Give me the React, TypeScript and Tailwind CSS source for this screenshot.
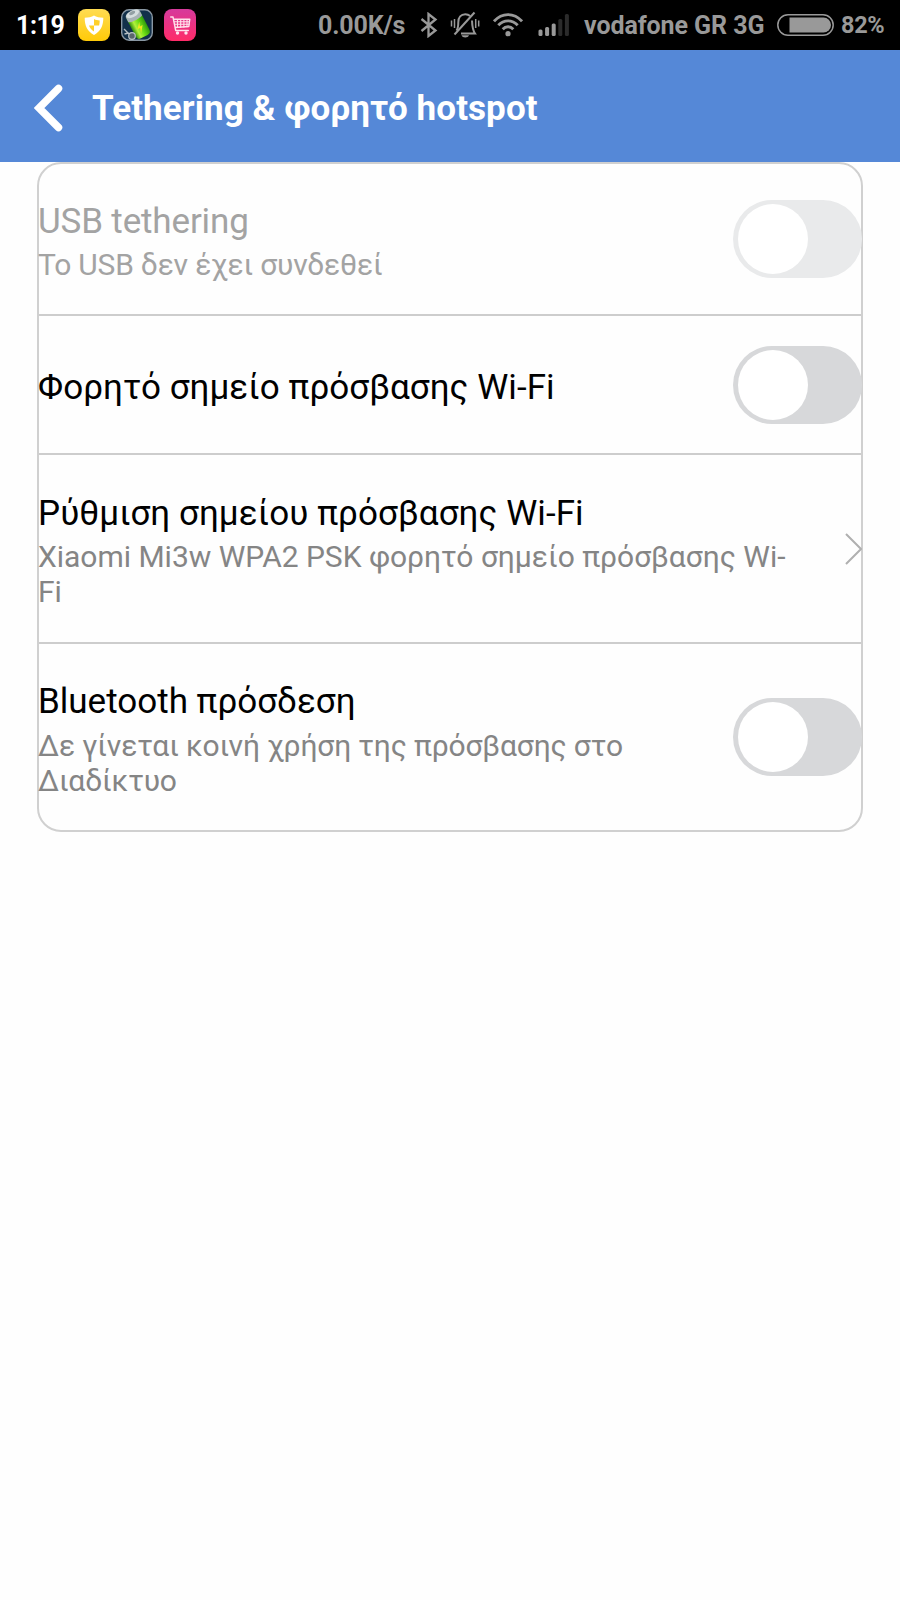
// ============================================
// Tethering settings
// Phone settings screen with status bar
// ============================================

import { ReactNode } from 'react';

interface SettingRow {
  title: string;
  lines?: string[];
  control: 'toggle' | 'link';
  disabled?: boolean;
  height: string;
  titleTracking: string;
  textTracking?: string;
}

const rows: SettingRow[] = [
  {
    title: 'USB tethering',
    lines: ['Το USB δεν έχει συνδεθεί'],
    control: 'toggle',
    disabled: true,
    height: 'h-[152px]',
    titleTracking: 'tracking-[-0.15px]',
    textTracking: 'tracking-[-0.22px]',
  },
  {
    title: 'Φορητό σημείο πρόσβασης Wi-Fi',
    control: 'toggle',
    height: 'h-[139px]',
    titleTracking: 'tracking-[0.06px]',
  },
  {
    title: 'Ρύθμιση σημείου πρόσβασης Wi-Fi',
    lines: ['Xiaomi Mi3w WPA2 PSK φορητό σημείο πρόσβασης Wi-', 'Fi'],
    control: 'link',
    height: 'h-[189px]',
    titleTracking: 'tracking-[0.08px]',
    textTracking: 'tracking-[-0.02px]',
  },
  {
    title: 'Bluetooth πρόσδεση',
    lines: ['Δε γίνεται κοινή χρήση της πρόσβασης στο', 'Διαδίκτυο'],
    control: 'toggle',
    height: 'h-[186px]',
    titleTracking: 'tracking-normal',
    textTracking: 'tracking-[-0.15px]',
  },
];

// Notification icons
const ShieldApp = () => (
  <svg className="w-8 h-8 shrink-0" viewBox="0 0 32 32">
    <defs>
      <linearGradient id="shield-bg" x1="0" y1="0" x2="0" y2="1">
        <stop offset="0" stopColor="#ffdc52" />
        <stop offset="1" stopColor="#ffca08" />
      </linearGradient>
    </defs>
    <rect width="32" height="32" rx="8" fill="url(#shield-bg)" />
    <path d="M16 6.500c2.500 1.500 5.500 2.200 9.300 2.200 0 8-2.500 13.300-9.300 17.300-6.800-4-9.300-9.300-9.300-17.300 3.800 0 6.800-.7 9.300-2.200z" fill="#fff" />
    <path d="M16 10c1.800 1 3.500 1.300 5.700 1.500 0 1.600-.2 3.300-.6 5H16zM16 16.500h-5c.8 2.400 2.400 4.400 5 6z" fill="#ffd02a" />
  </svg>
);

const BatteryApp = () => (
  <svg className="w-8 h-8 shrink-0" viewBox="0 0 32 32">
    <defs>
      <linearGradient id="cell" x1="0" y1="0" x2="1" y2="0">
        <stop offset="0" stopColor="#2c8a0c" />
        <stop offset="0.3" stopColor="#b2f23c" />
        <stop offset="0.6" stopColor="#6ddd14" />
        <stop offset="1" stopColor="#2f9a0c" />
      </linearGradient>
    </defs>
    <rect x="0.7" y="0.7" width="30.6" height="30.6" rx="7.5" fill="#12304a" stroke="#8997a3" strokeWidth="1.4" />
    <g transform="rotate(-27 16 15)">
      <rect x="9" y="3" width="15.500" height="26.500" rx="4" fill="url(#cell)" />
      <path d="M9 9.500V4.500c0-5 15.500-5 15.500 0v5c-3 2-12.500 2-15.500 0z" fill="#a7b2b5" />
      <ellipse cx="16.700" cy="4" rx="7" ry="3.200" fill="#d5dddf" />
      <ellipse cx="16.700" cy="3" rx="3.300" ry="1.600" fill="#93a0a4" />
      <path d="M19 14l-5 6h3l-1.500 5 5-6.500h-3z" fill="#f4e51f" />
    </g>
    <path d="M3 20l5 5M3.500 25l4-1" stroke="#b4bdc2" strokeWidth="1.4" />
    <circle cx="11" cy="27" r="3.300" fill="#59656c" stroke="#b9c1c5" strokeWidth="1.2" />
  </svg>
);

const CartApp = () => (
  <svg className="w-8 h-8 shrink-0" viewBox="0 0 32 32">
    <defs>
      <linearGradient id="cart-bg" x1="0" y1="0" x2="0" y2="1">
        <stop offset="0" stopColor="#d63a9c" />
        <stop offset="1" stopColor="#ff2b68" />
      </linearGradient>
    </defs>
    <rect width="32" height="32" rx="8" fill="url(#cart-bg)" />
    <g fill="none" stroke="#ffe3ec" strokeWidth="1.4" strokeLinecap="round" strokeLinejoin="round">
      <path d="M6.700 8H9l2.700 13.500h12.600M9.600 10.200h16.200l-1 7.300-13.800 1" />
      <path d="M10.300 12.700h15M10.800 15.300h14.300M13.500 10.500v8M16.700 10.500v7.800M19.900 10.500v7.600M23 10.500v7.300" strokeWidth="1.1" />
    </g>
    <circle cx="13.500" cy="24" r="1.700" fill="#ffe3ec" />
    <circle cx="22" cy="24" r="1.700" fill="#ffe3ec" />
  </svg>
);

// System icons
const BluetoothIcon = () => (
  <svg className="w-[18px] h-[26px] shrink-0" viewBox="0 0 18 26" fill="none" stroke="#999" strokeWidth="2.3">
    <path d="M1.500 7l14 11.500L8.500 24V2l7 5.500L1.500 19" />
  </svg>
);

const MutedBellIcon = () => (
  <svg className="w-[30px] h-[28px] shrink-0" viewBox="0 0 30 28" fill="none" stroke="#999">
    <path d="M6.500 19.500c1.500-2 1.800-4 1.800-8.300 0-4.800 2.700-8 7-8 1.900 0 3.600.7 4.900 1.800M22 9.500c.2 5.500.4 9.300 3 13H11" strokeWidth="2" />
    <path d="M24.500 1.500L4.500 23.500" strokeWidth="2" />
    <path d="M1.500 9.500v6M4.500 8v9M25.700 8v9M28.700 9.500v6" strokeWidth="1.5" />
    <path d="M11.500 24.300h7.500c-1 3-6.500 3-7.500 0z" fill="#999" stroke="none" />
  </svg>
);

const WifiIcon = () => (
  <svg className="w-[30px] h-[24px] shrink-0" viewBox="0 0 30 24" fill="none" stroke="#999" strokeWidth="2.8">
    <path d="M1 8.300C9-.7 21-.7 29 8.300" />
    <path d="M5.300 12.300c5.500-6 13.900-6 19.400 0" />
    <path d="M9.700 16.200c3-3.300 7.600-3.300 10.600 0" />
    <circle cx="15" cy="20.700" r="2.600" fill="#999" stroke="none" />
  </svg>
);

const SignalIcon = () => (
  <svg className="w-[32px] h-[22px] shrink-0" viewBox="0 0 32 22">
    <rect x="0.5" y="15.5" width="4" height="6.5" rx="1.5" fill="#999" />
    <rect x="7.1" y="13" width="4" height="9" rx="1.5" fill="#999" />
    <rect x="13.7" y="9.5" width="4" height="12.5" rx="1.5" fill="#999" />
    <rect x="20.3" y="5" width="4" height="17" rx="1.5" fill="#2b2b2b" />
    <rect x="26.9" y="0" width="4" height="22" rx="1.5" fill="#2b2b2b" />
  </svg>
);

const BatteryIcon = () => (
  <svg className="w-[57px] h-[22px] shrink-0" viewBox="0 0 57 22">
    <rect x="0.8" y="0.8" width="55.4" height="20.4" rx="10.2" fill="none" stroke="#999" strokeWidth="1.5" />
    <path d="M12.500 3.500H46.500a7.500 7.500 0 0 1 0 15H12.500z" fill="#999" />
  </svg>
);

const StatusText = ({ className, children }: { className: string; children: ReactNode }) => (
  <span className={`shrink-0 whitespace-nowrap font-bold leading-none ${className}`}>{children}</span>
);

const StatusBar = () => (
  <div className="flex h-[50px] items-center bg-black pl-4 text-[25px] text-[#999]">
    <StatusText className="w-[61.5px] tracking-[-0.4px] text-white">1:19</StatusText>
    <div className="flex w-[240.5px] shrink-0 gap-[11.3px]">
      <ShieldApp />
      <BatteryApp />
      <CartApp />
    </div>
    <StatusText className="w-[102px] tracking-[-0.15px]">0.00K/s</StatusText>
    <div className="flex w-[164px] shrink-0 items-center">
      <BluetoothIcon />
      <div className="ml-3"><MutedBellIcon /></div>
      <div className="ml-[13px]"><WifiIcon /></div>
      <div className="ml-[15px]"><SignalIcon /></div>
    </div>
    <StatusText className="w-[193px] tracking-[-0.08px]">vodafone GR 3G</StatusText>
    <BatteryIcon />
    <StatusText className="ml-[7px] pt-[2px] text-[23.5px] tracking-[-0.3px]">82%</StatusText>
  </div>
);

const Toggle = ({ disabled }: { disabled?: boolean }) => (
  <button
    role="switch"
    aria-checked={false}
    disabled={disabled}
    className={`-mr-px flex h-[78px] w-[129px] shrink-0 items-center rounded-full pl-[4.5px] ${
      disabled ? 'bg-[#e9eaeb]' : 'bg-[#d7d8da]'
    }`}
  >
    <span className="h-[70px] w-[70px] rounded-full bg-white" />
  </button>
);

const Row = ({ row }: { row: SettingRow }) => (
  <div className={`flex items-center justify-between ${row.height}`}>
    <div className={`-ml-px shrink-0 whitespace-nowrap pt-[5px] ${row.disabled ? 'text-[#a3a3a3]' : 'text-black'}`}>
      <h2 className={`text-[35px] leading-[41px] ${row.titleTracking}`}>{row.title}</h2>
      {row.lines && (
        <div
          className={`mt-[5.5px] text-[30px] leading-[35px] ${row.textTracking} ${
            row.disabled ? '' : 'text-[#858585]'
          }`}
        >
          {row.lines.map((line) => (
            <p key={line}>{line}</p>
          ))}
        </div>
      )}
    </div>
    {row.control === 'toggle' ? (
      <Toggle disabled={row.disabled} />
    ) : (
      <svg className="-mr-px h-[32px] w-[17px] shrink-0" viewBox="0 0 17 32" fill="none" stroke="#b0b0b0" strokeWidth="2">
        <path d="M1 1l15 15L1 31" />
      </svg>
    )}
  </div>
);

const App = () => {
  return (
    <div className="min-h-[1600px] w-[900px] bg-[#fefefe] font-['Roboto',sans-serif]">
      <StatusBar />

      {/* Page Header */}
      <header className="flex h-[112px] items-center bg-[#5588d7] pl-[34px] pt-[3px] text-white">
        <svg className="h-[48px] w-[29px] shrink-0" viewBox="0 0 29 48" fill="none" stroke="#fff" strokeWidth="7.5" strokeLinecap="round">
          <path d="M24.500 4.500L5 24l19.500 19.500" />
        </svg>
        <h1 className="ml-[29px] whitespace-nowrap pt-px text-[35px] font-bold leading-[41px] tracking-[0.08px]">
          Tethering &amp; φορητό hotspot
        </h1>
      </header>

      {/* Settings List */}
      <main className="mx-[37px] divide-y-2 divide-[#cdcdcd] rounded-[24px] border-2 border-[#d0d0d0]">
        {rows.map((row) => (
          <Row key={row.title} row={row} />
        ))}
      </main>
    </div>
  );
};

export default App;
